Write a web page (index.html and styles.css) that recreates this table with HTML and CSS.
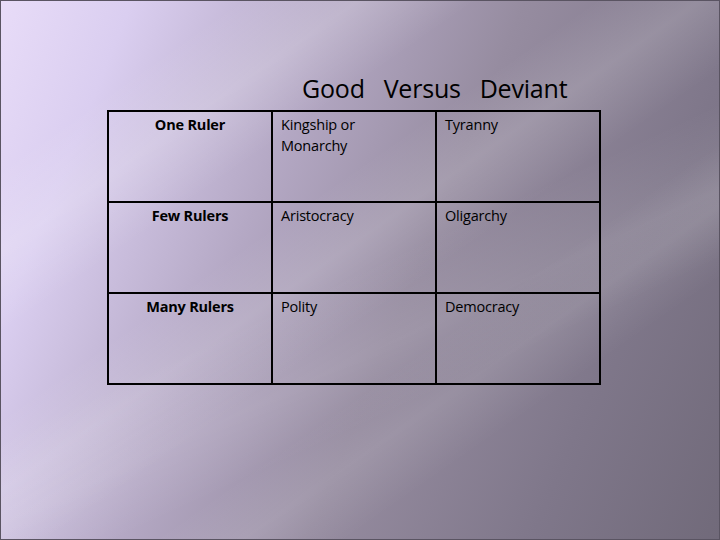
FILE: index.html
```html
<!DOCTYPE html>
<html>
<head>
<meta charset="utf-8">
<link rel="stylesheet" href="styles.css">
</head>
<body>
<div class="slide">
  <h1 class="title">Good   Versus   Deviant</h1>
  <table class="grid">
    <tr>
      <th>One Ruler</th>
      <td>Kingship or<br>Monarchy</td>
      <td>Tyranny</td>
    </tr>
    <tr>
      <th>Few Rulers</th>
      <td>Aristocracy</td>
      <td>Oligarchy</td>
    </tr>
    <tr>
      <th>Many Rulers</th>
      <td>Polity</td>
      <td>Democracy</td>
    </tr>
  </table>
</div>
</body>
</html>
```
FILE: styles.css
```css
html, body {
  margin: 0;
  padding: 0;
}
.slide {
  box-sizing: border-box;
  width: 720px;
  height: 540px;
  border: 1px solid #5a5462;
  overflow: hidden;
  font-family: "Open Sans", "Liberation Sans", sans-serif;
  color: #000;
  padding: 70px 0 0 106px;
  background:
    linear-gradient(145deg, rgba(255,255,255,0) 16%, rgba(255,255,255,0.18) 24%, rgba(255,255,255,0) 32%, rgba(255,255,255,0) 40%, rgba(255,255,255,0.14) 47%, rgba(255,255,255,0) 55%, rgba(255,255,255,0) 62%, rgba(255,255,255,0.1) 68%, rgba(255,255,255,0) 75%),
    linear-gradient(155deg, rgba(255,255,255,0) 50%, rgba(255,255,255,0.1) 60%, rgba(255,255,255,0) 68%),
    linear-gradient(112deg, #e8dcf8 0%, #dacef0 14%, #b4a8c4 36%, #968ca0 56%, #7f778a 80%, #716a7a 100%);
}
.title {
  margin: 0 0 5px 195px;
  font-size: 25px;
  font-weight: 400;
  line-height: 34px;
  white-space: pre;
  letter-spacing: -0.2px;
}
.grid {
  border-collapse: collapse;
  border: 2px solid #000;
}
.grid th, .grid td {
  border: 2px solid #000;
  width: 146px;
  height: 75px;
  padding: 2px 8px 12px 8px;
  vertical-align: top;
  font-size: 14.5px;
  line-height: 21px;
  letter-spacing: -0.2px;
}
.grid th {
  font-weight: 700;
  text-align: center;
}
.grid td {
  font-weight: 400;
  text-align: left;
}
```
